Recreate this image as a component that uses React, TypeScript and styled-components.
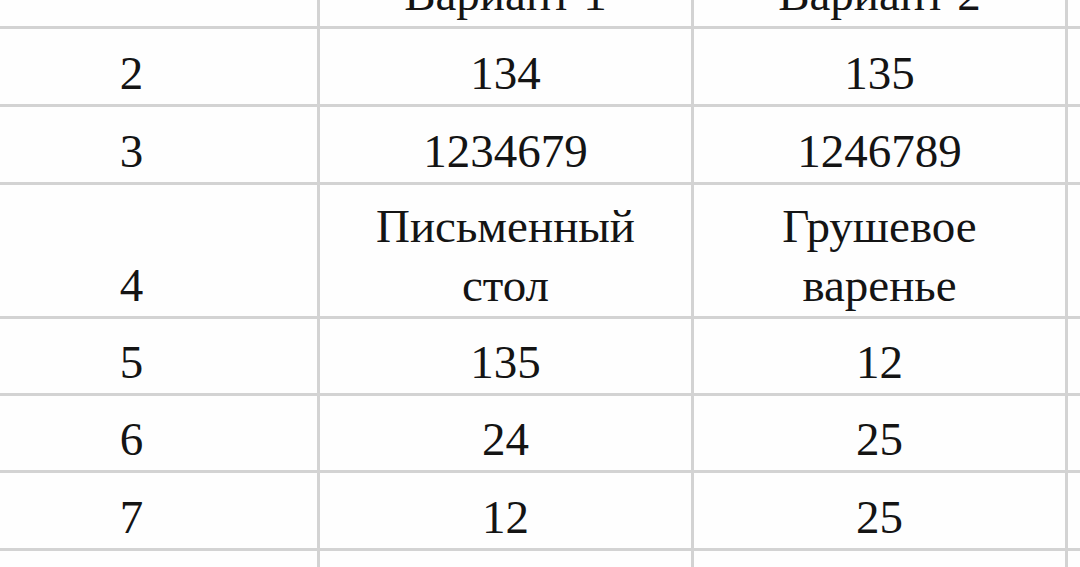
import React from 'react';
import styled, { createGlobalStyle } from 'styled-components';

/* ── Global ──────────────────────────────────────────────────────── */

const GlobalStyle = createGlobalStyle`
  html, body {
    margin: 0;
    padding: 0;
    background: #ffffff;
  }
  body {
    font-family: "Liberation Serif", "Times New Roman", serif;
    color: #141414;
  }
`;

/* ── Styled Components ───────────────────────────────────────────── */

const Viewport = styled.div`
  width: 1080px;
  height: 567px;
  overflow: hidden;
  background: #fefefe;
`;

const Sheet = styled.table`
  border-collapse: collapse;
  table-layout: fixed;
  width: 1499px;
  margin-top: -52px;
  margin-left: -57px;
`;

const Col = styled.col`
  width: 374px;
`;

const Row = styled.tr<{ $height: number }>`
  height: ${(p) => p.$height}px;
`;

const Cell = styled.td<{ $header?: boolean }>`
  border: 3px solid #d3d3d3;
  padding: 0 8px ${(p) => (p.$header ? 2 : 1)}px;
  vertical-align: bottom;
  text-align: center;
  font-size: 47px;
  line-height: 59px;
  color: #141414;
  white-space: pre-line;
`;

/* ── Data ────────────────────────────────────────────────────────── */

type RowData = { height: number; cells: string[]; header?: boolean };

const rows: RowData[] = [
  { height: 78, cells: ['', 'Вариант 1', 'Вариант 2', ''], header: true },
  { height: 78, cells: ['2', '134', '135', ''] },
  { height: 78, cells: ['3', '1234679', '1246789', ''] },
  { height: 134, cells: ['4', 'Письменный\nстол', 'Грушевое\nваренье', ''] },
  { height: 77, cells: ['5', '135', '12', ''] },
  { height: 77, cells: ['6', '24', '25', ''] },
  { height: 78, cells: ['7', '12', '25', ''] },
  { height: 78, cells: ['', '', '', ''] },
];

/* ── Component ───────────────────────────────────────────────────── */

const App: React.FC = () => (
  <>
    <GlobalStyle />
    <Viewport>
      <Sheet>
        <colgroup>
          <Col />
          <Col />
          <Col />
          <Col />
        </colgroup>
        <tbody>
          {rows.map((row, i) => (
            <Row key={i} $height={row.height}>
              {row.cells.map((text, j) => (
                <Cell key={j} $header={row.header}>
                  {text}
                </Cell>
              ))}
            </Row>
          ))}
        </tbody>
      </Sheet>
    </Viewport>
  </>
);

export default App;
